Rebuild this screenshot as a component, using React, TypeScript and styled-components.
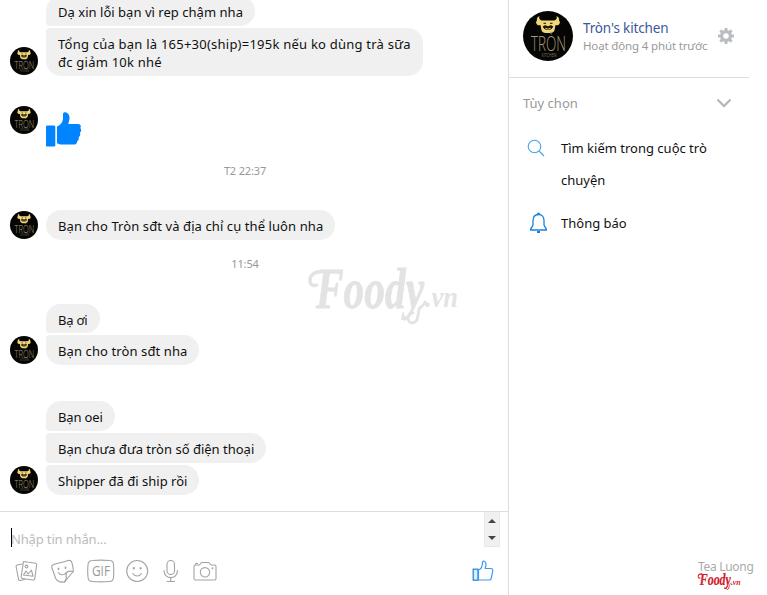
import React from "react";
import styled, { createGlobalStyle } from "styled-components";

const GlobalStyle = createGlobalStyle`
  * { box-sizing: border-box; }
  html, body { margin: 0; background: #fff; overflow: hidden; }
  body { font-family: "Noto Sans", "Open Sans", sans-serif; font-size: 13px; color: #111; }
`;

const Page = styled.main`
  position: relative;
  display: grid;
  grid-template-columns: 509px 240px;
  width: 767px;
  height: 595px;
  overflow: hidden;
  background: #fff;
`;
const Chat = styled.section`
  display: flex;
  flex-direction: column;
  height: 595px;
  border-right: 1px solid #dedede;
`;
const Thread = styled.div`
  height: 511px;
  overflow: hidden;
  display: flex;
  flex-direction: column;
`;
const Group = styled.div<{ $top: number }>`
  display: flex;
  align-items: flex-end;
  gap: 8px;
  padding-left: 10px;
  margin-top: ${(p) => p.$top}px;
`;
const Bubbles = styled.div`
  display: flex;
  flex-direction: column;
  align-items: flex-start;
  gap: 2px;
`;
const Bubble = styled.div<{ $first?: boolean; $last?: boolean; $track?: number; $short?: boolean }>`
  padding: ${(p) => (p.$short ? "7px 12px 4px" : "7px 12px 5px")};
  line-height: 18px;
  white-space: nowrap;
  background: #f0f0f0;
  letter-spacing: ${(p) => p.$track ?? 0}px;
  border-radius: ${(p) => (p.$first ? 15 : 4)}px 15px 15px ${(p) => (p.$last ? 15 : 4)}px;
`;
const AvatarSlot = styled.div<{ $bottom?: number }>`
  width: 28px;
  height: 28px;
  margin-bottom: ${(p) => p.$bottom ?? 1}px;
`;
const Time = styled.time<{ $top: number }>`
  display: block;
  width: 490px;
  height: 16px;
  margin-top: ${(p) => p.$top}px;
  text-align: center;
  font-size: 11px;
  line-height: 16px;
  letter-spacing: -0.15px;
  color: #999;
`;
const Composer = styled.footer`
  flex: 1;
  display: flex;
  flex-direction: column;
  border-top: 1px solid #dedede;
`;
const InputRow = styled.div`
  display: flex;
  justify-content: space-between;
  height: 36px;
  padding: 0 8px 0 11px;
`;
const Field = styled.div`
  height: 19px;
  margin-top: 16px;
  border-left: 1px solid #000;
  line-height: 22px;
  letter-spacing: -0.15px;
  text-indent: -1px;
  color: #bcbcbc;
`;
const ScrollTrack = styled.div`
  width: 16px;
  height: 35px;
  background: #f0f0f0;
  border: 1px solid #e8e8e8;
  border-top: 0;
  display: flex;
  flex-direction: column;
  justify-content: space-between;
  align-items: center;
  padding: 7px 0 6px;
`;
const Tools = styled.div`
  display: flex;
  align-items: center;
  height: 24px;
  margin-top: 11px;
  padding: 0 14px 0 15px;
`;
const Tool = styled.div<{ $w: number; $gap?: number }>`
  display: flex;
  width: ${(p) => p.$w}px;
  height: 24px;
  margin-right: ${(p) => p.$gap ?? 0}px;
`;
const Spacer = styled.div`flex: 1;`;
const Side = styled.aside`
  display: flex;
  flex-direction: column;
`;
const Profile = styled.header`
  display: flex;
  height: 78px;
  padding: 11px 15px 0 14px;
  border-bottom: 1px solid #dedede;
`;
const Names = styled.div`
  flex: 1;
  padding: 8px 0 0 10px;
  white-space: nowrap;
`;
const Name = styled.div`
  font-size: 13.5px;
  line-height: 18px;
  letter-spacing: -0.15px;
  color: #3b5998;
`;
const Activity = styled.div`
  font-size: 11.5px;
  line-height: 18px;
  letter-spacing: -0.15px;
  color: #999;
`;
const Gear = styled.div`
  width: 16px;
  padding-top: 17px;
`;
const OptionsHead = styled.div`
  display: flex;
  justify-content: space-between;
  align-items: center;
  height: 50px;
  padding: 0 17px 0 14px;
  color: #999;
`;
const Options = styled.nav`
  display: flex;
  flex-direction: column;
  padding-top: 4px;
`;
const Option = styled.div<{ $h: number }>`
  display: flex;
  height: ${(p) => p.$h}px;
  padding-left: 18px;
  gap: 12px;
  line-height: 32px;
`;
const OptionIcon = styled.div`
  width: 22px;
  height: 32px;
  display: flex;
  align-items: center;
`;
const OptionText = styled.div`
  width: 165px;
`;
const Watermark = styled.div`
  position: absolute;
  left: 306px;
  top: 262px;
`;
const Credit = styled.div`
  position: absolute;
  left: 698px;
  top: 559px;
  width: 60px;
  font-size: 12px;
  line-height: 16px;
  letter-spacing: -0.3px;
  color: #aaa;
  white-space: nowrap;
`;
const CreditLogo = styled.div`
  height: 20px;
  margin: -4px 0 0 -1px;
`;

const Avatar = ({ size }: { size: number }) => (
  <svg width={size} height={size} viewBox="0 0 50 50" display="block">
    <circle cx="25" cy="25" r="25" fill="#050504" />
    <path d="M16.500 5c-1 3 1 4.500 3 4.500h11c2 0 4-1.500 3-4.500 2.500 1 3 3 2.500 4.500 1 .5 1.500 2.500 0 4-1 1-2.500 1-3.500.5l-.8 4.500c-.5 3-3 3.500-6.700 3.500s-6.200-.5-6.700-3.500l-.8-4.500c-1 .5-2.500.5-3.500-.5-1.500-1.500-1-3.500 0-4-.5-1.500 0-3.500 2.500-4.500z" fill="#f2d779" />
    <path d="M20.500 12.300h2.500M27 12.300h2.500M20.300 15.500c1.200-1 3-1 4.700.6 1.700-1.600 3.500-1.600 4.700-.6-.5 4-9 4-9.400 0z" fill="#171209" stroke="#171209" strokeWidth="1" />
    <path d="M22.300 17.200q2.700 2 5.400 0" fill="none" stroke="#f2d779" strokeWidth="1" />
    <text x="8" y="39.500" textLength="35" lengthAdjust="spacingAndGlyphs" fill="#a79a78" fontFamily="Open Sans" fontWeight="300" fontSize="20">TRÒN</text>
    <text x="18.500" y="45.500" textLength="15" lengthAdjust="spacingAndGlyphs" fill="#81765d" fontFamily="Open Sans" fontSize="4.5">KITCHEN</text>
  </svg>
);

const Foody = ({ w, h, color }: { w: number; h: number; color: string }) => (
  <svg width={w} height={h} viewBox="0 0 154 66" preserveAspectRatio="none" display="block">
    <g fill={color} stroke={color} fontFamily="Liberation Serif, serif" fontStyle="italic" fontWeight="700">
      <text x="10" y="46" fontSize="56" textLength="108" lengthAdjust="spacingAndGlyphs" strokeWidth=".8">Foody</text>
      <text x="119" y="45" fontSize="29" textLength="33" lengthAdjust="spacingAndGlyphs" strokeWidth="0">.vn</text>
      <path d="M17 9.500C8 9 2 14 4.500 21c1 2.500 4 3 6 2" fill="none" strokeWidth="3.500" strokeLinecap="round" />
      <path d="M107 51c-7 0-6 10-1 10 6 0 6-8 7-14 1-2 5-3 6-7" fill="none" strokeWidth="2.800" strokeLinecap="round" />
    </g>
  </svg>
);

const BigThumb = () => (
  <svg width="36" height="36" viewBox="0 0 36 36" display="block" fill="#0084ff">
    <rect x="0" y="13.5" width="9.3" height="21" rx="1.3" />
    <path d="M11 14.500c3.500-1.500 5.500-4 6-7.500V2c0-2.500 5-2.700 6.300 2 .7 2.500-.3 5.500-1 8H32c2.600 0 3.500 2 2.300 4 1.200 1.400 1.100 3.600-.4 4.800.8 1.700.2 3.500-1.200 4.400.5 2-.3 3.500-1.500 4-.2 2.500-1.200 3.300-3.700 3.300H16c-2.200 0-3.300-.5-5-1.300z" />
  </svg>
);

type Item = { text: React.ReactNode; track?: number; short?: boolean };
const Messages = ({ top, items }: { top: number; items: Item[] }) => (
  <Group $top={top}>
    <AvatarSlot><Avatar size={28} /></AvatarSlot>
    <Bubbles>
      {items.map((m, i) => (
        <Bubble key={i} $first={i === 0} $last={i === items.length - 1} $track={m.track} $short={m.short}>{m.text}</Bubble>
      ))}
    </Bubbles>
  </Group>
);

const line = { fill: "none", stroke: "#a3a3a3", strokeWidth: 1.1, strokeLinecap: "round", strokeLinejoin: "round" } as const;

export default function App() {
  return (
    <>
      <GlobalStyle />
      <Page>
        <Chat>
          <Thread>
            <Messages
              top={-4}
              items={[
                { text: "Dạ xin lỗi bạn vì rep chậm nha", track: 0.03 },
                { text: <>Tổng của bạn là 165+30(ship)=195k nếu ko dùng trà sữa<br />đc giảm 10k nhé</>, track: 0.23 },
              ]}
            />
            <Group $top={30}>
              <AvatarSlot $bottom={14}><Avatar size={28} /></AvatarSlot>
              <BigThumb />
            </Group>
            <Time $top={15}>T2 22:37</Time>
            <Messages top={31} items={[{ text: "Bạn cho Tròn sđt và địa chỉ cụ thể luôn nha", track: 0.09 }]} />
            <Time $top={16}>11:54</Time>
            <Messages top={32} items={[{ text: "Bạ ơi", short: true, track: -0.2 }, { text: "Bạn cho tròn sđt nha", track: 0.1 }]} />
            <Messages
              top={36}
              items={[{ text: "Bạn oei", track: -0.15 }, { text: "Bạn chưa đưa tròn số điện thoại" }, { text: "Shipper đã đi ship rồi" }]}
            />
          </Thread>
          <Composer>
            <InputRow>
              <Field>Nhập tin nhắn...</Field>
              <ScrollTrack>
                <svg width="8" height="4" viewBox="0 0 8 4"><path d="M4 0l4 4H0z" fill="#444" /></svg>
                <svg width="8" height="4" viewBox="0 0 8 4"><path d="M0 0h8L4 4z" fill="#444" /></svg>
              </ScrollTrack>
            </InputRow>
            <Tools>
              <Tool $w={23} $gap={13}>
                <svg width="23" height="24" viewBox="0 0 23 24" {...line}>
                  <path d="M8.500 2.500l12 1.700c.8.100 1.300.8 1.200 1.600l-2 14c-.1.800-.8 1.300-1.600 1.200L7.300 19.500c-.8-.1-1.300-.8-1.200-1.600L8.500 2.500z" />
                  <path d="M7 5l-5 1c-.8.200-1 .8-.9 1.500l2.500 13c.2.800.8 1.200 1.600 1l4.500-1M8.500 16l2.500-4 2 3 3.500-3.800 1.500 6z" />
                  <circle cx="11.500" cy="7.500" r="1.400" />
                </svg>
              </Tool>
              <Tool $w={23} $gap={13}>
                <svg width="23" height="24" viewBox="0 0 23 24" {...line}>
                  <path d="M1.500 6C6 4.500 11 3.500 17 1.500c2.300-.6 3.500.5 4 2.500.8 3 1.500 6 1.300 8.500L13.500 23C9 23.500 6 22.500 4.500 19L1 9c-.4-1.300-.4-2.400.5-3z" />
                  <path d="M22.200 12.500c-5-1.200-8 .5-7 4.500.5 2.500-.3 4.500-1.700 6M7.500 13.500c1.500 3 5.500 3 7.500.2" />
                  <path d="M7.500 9.500v.5M14.500 8.500v.5" strokeWidth="1.800" />
                </svg>
              </Tool>
              <Tool $w={28} $gap={11}>
                <svg width="28" height="24" viewBox="0 0 28 24">
                  <path d="M5.500 1.500Q14 .7 22.500 1.500q4 0 4 4.500.6 6 0 12 0 4.500-4 4.500-8.500.8-17 0-4.500 0-4.500-4.500Q.4 12 1 6q0-4.500 4.500-4.500z" {...line} />
                  <text x="5" y="17.400" fontSize="14" textLength="18" lengthAdjust="spacingAndGlyphs" fill="#999" fontFamily="Open Sans, sans-serif">GIF</text>
                </svg>
              </Tool>
              <Tool $w={23} $gap={14}>
                <svg width="23" height="24" viewBox="0 0 23 24" {...line}>
                  <circle cx="11.200" cy="12" r="10.500" />
                  <path d="M6.800 14.500c2 3.300 6.800 3.300 8.800 0" />
                  <path d="M7.800 9v.5M14.600 9v.5" strokeWidth="2" />
                </svg>
              </Tool>
              <Tool $w={15} $gap={15}>
                <svg width="15" height="24" viewBox="0 0 15 24" {...line}>
                  <rect x="4" y="1.500" width="7.500" height="14" rx="3.750" />
                  <path d="M1 11.500c0 9.500 13.500 9.500 13.500 0M7.700 19v3.500M4 22.500h7.500" />
                </svg>
              </Tool>
              <Tool $w={24}>
                <svg width="24" height="24" viewBox="0 0 24 24" {...line}>
                  <path d="M2.500 6h4l2-2.500h7.500L18 6h3.500q1.500 0 1.500 1.500v12q0 1.500-1.500 1.500h-19Q1 21 1 19.500v-12Q1 6 2.500 6zM2.500 6q0-2 2-1.500" />
                  <circle cx="12" cy="13.300" r="4.700" />
                  <path d="M19.500 9.200v.3" strokeWidth="1.700" />
                </svg>
              </Tool>
              <Spacer />
              <Tool $w={22}>
                <svg width="22" height="24" viewBox="0 0 22 24">
                  <rect x="1.200" y="10.200" width="4.800" height="11" fill="#dcefff" stroke="#1682dc" strokeWidth="1.200" />
                  <path d="M6.500 11c3-1 4-3.500 4-7.500 0-2.200 3.500-1.600 3.500 1.500 0 2-.5 3.500-.8 4.500H19c1.500 0 2 1.500 1.700 3l-1.500 7c-.2 1-.8 1.500-1.800 1.500H6.500z" fill="#fff" stroke="#3a9af0" strokeWidth="1.200" strokeLinejoin="round" />
                </svg>
              </Tool>
            </Tools>
          </Composer>
        </Chat>
        <Side>
          <Profile>
            <Avatar size={50} />
            <Names>
              <Name>Tròn's kitchen</Name>
              <Activity>Hoạt động 4 phút trước</Activity>
            </Names>
            <Gear>
              <svg width="16" height="16" viewBox="0 0 16 16" display="block">
                <circle cx="8" cy="8" r="4.400" fill="none" stroke="#b9bdc2" strokeWidth="3.200" />
                <g stroke="#b9bdc2" strokeWidth="3">
                  <path d="M8 0v3M8 13v3M0 8h3M13 8h3M2.400 2.400l2 2M11.600 11.600l2 2M2.400 13.600l2-2M11.600 4.400l2-2" />
                </g>
              </svg>
            </Gear>
          </Profile>
          <OptionsHead>
            <span>Tùy chọn</span>
            <svg width="16" height="10" viewBox="0 0 16 10"><path d="M1.500 1.500L8 8l6.500-6.500" fill="none" stroke="#b6babf" strokeWidth="2.300" /></svg>
          </OptionsHead>
          <Options>
            <Option $h={75}>
              <OptionIcon>
                <svg width="18" height="18" viewBox="0 0 18 18" fill="none" stroke="#4aa3ea" strokeWidth="1.100">
                  <circle cx="7.500" cy="7.500" r="6.300" /><path d="M12 12l5 5" />
                </svg>
              </OptionIcon>
              <OptionText>Tìm kiếm trong cuộc trò chuyện</OptionText>
            </Option>
            <Option $h={32}>
              <OptionIcon>
                <svg width="22" height="22" viewBox="0 0 22 22" fill="none" stroke="#1b83dc" strokeWidth="1.300" strokeLinejoin="round">
                  <path d="M11.500 2.500c-4 0-5.500 3-5.500 6v4c0 2-2.500 3.500-2.500 5.500h16c0-2-2.500-3.500-2.500-5.500v-4c0-3-1.500-6-5.500-6zM10 2.500q1.500-2.500 3 0" />
                  <path d="M10 20h3" strokeWidth="2" />
                </svg>
              </OptionIcon>
              <OptionText>Thông báo</OptionText>
            </Option>
          </Options>
        </Side>
        <Watermark><Foody w={154} h={66} color="#e3e3e3" /></Watermark>
        <Credit>
          Tea Luong
          <CreditLogo><Foody w={44} h={20} color="#d0202c" /></CreditLogo>
        </Credit>
      </Page>
    </>
  );
}
